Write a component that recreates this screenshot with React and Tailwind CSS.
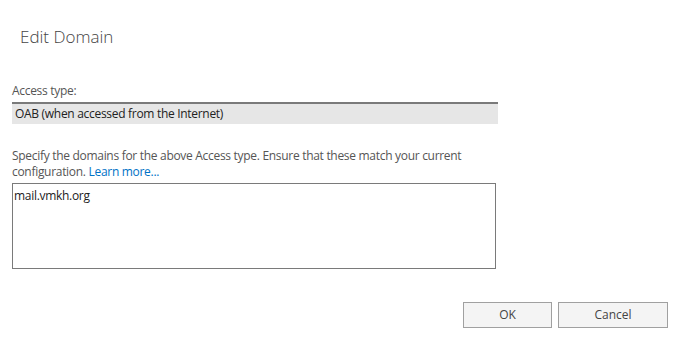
import React from 'react';

export default function App() {
  return (
    <div className="w-[700px] h-[360px] bg-white text-[#333] font-['Open_Sans','Noto_Sans',sans-serif] flex flex-col">
      <h1 className="pl-[20px] pt-[26px] text-[17px] font-light leading-[22px] text-[#444]">Edit Domain</h1>

      <div className="pl-[12px] pt-[35px] flex flex-col">
        <label className="text-[12px] leading-[16px] text-[#555] tracking-[-0.3px]">Access type:</label>
        <div className="mt-[3px] w-[486px] h-[22px] bg-[#e6e6e6] border-t-2 border-[#7a7a7a] pl-[3px] text-[12px] leading-[19px] text-[#222] tracking-[-0.3px]">
          OAB (when accessed from the Internet)
        </div>

        <p className="mt-[24px] w-[480px] text-[12px] leading-[16px] text-[#555] tracking-[-0.3px]">
          Specify the domains for the above Access type. Ensure that these match your current configuration.{' '}
          <span className="text-[#0072c6]">Learn more...</span>
        </p>
        <div className="mt-[3px] w-[484px] h-[86px] border border-[#7a7a7a] bg-white px-[1px] py-[3px] text-[12px] leading-[17px] text-[#222] tracking-[-0.3px]">
          mail.vmkh.org
        </div>
      </div>

      <div className="mt-[33px] pr-[32px] flex justify-end gap-[6px]">
        <button className="w-[89px] h-[26px] border border-[#a0a0a0] bg-[#f4f4f4] text-[12px] text-[#444]">OK</button>
        <button className="w-[110px] h-[26px] border border-[#a0a0a0] bg-[#f4f4f4] text-[12px] text-[#444]">Cancel</button>
      </div>
    </div>
  );
}
